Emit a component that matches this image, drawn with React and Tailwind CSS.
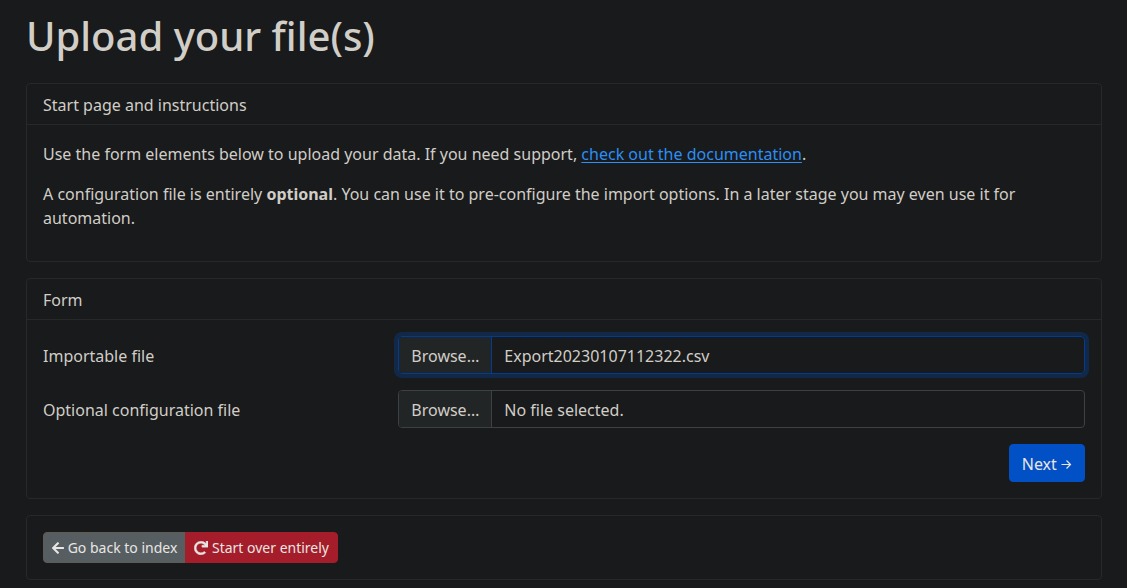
import { useState } from "react";
import { FaArrowLeft, FaRedo } from "react-icons/fa";

function Card({ title, children }) {
  return (
    <section className="rounded border border-[#272828] bg-[#181a1b]">
      {title && (
        <h2 className="border-b border-[#272828] px-4 pt-[9px] pb-[7px]">{title}</h2>
      )}
      <div className="p-4">{children}</div>
    </section>
  );
}

function FileRow({ id, label, initialName, active }) {
  const [name, setName] = useState(initialName);
  const border = active ? "border-[#013c91]" : "border-[#3c4144]";
  const ring = active ? "ring-4 ring-[#122849]" : "";
  return (
    <div className="-mx-3 mb-4 grid grid-cols-3">
      <label htmlFor={id} className="px-3 pt-2 pb-1.5">
        {label}
      </label>
      <div className="col-span-2 px-3">
        <label
          htmlFor={id}
          className={`relative flex cursor-pointer overflow-hidden rounded border ${border} ${ring}`}
        >
          <input
            id={id}
            type="file"
            className="sr-only"
            onChange={(e) => setName(e.target.files[0]?.name ?? "No file selected.")}
          />
          <span className={`border-r bg-[#222526] px-3 pt-[7px] pb-[5px] ${border}`}>
            Browse…
          </span>
          <span className="px-3 pt-[7px] pb-[5px]">{name}</span>
        </label>
      </div>
    </div>
  );
}

export default function App() {
  return (
    <main className="flex min-h-screen flex-col gap-4 bg-[#181a1b] pt-3 pr-[25px] pb-2 pl-[26px] font-['Noto_Sans',sans-serif] text-base text-[#d1cdc7]">
      <h1 className="mb-[7px] text-[40px] leading-[48px] font-medium">Upload your file(s)</h1>

      <Card title="Start page and instructions">
        <div className="pt-px pb-[15px]">
          <p className="mb-4">
            Use the form elements below to upload your data. If you need support,{" "}
            <a href="#documentation" className="text-[#2b8ff5] underline underline-offset-2">
              check out the documentation
            </a>
            .
          </p>
          <p>
            A configuration file is entirely <strong className="font-bold">optional</strong>. You
            can use it to pre-configure the import options. In a later stage you may even use it
            for automation.
          </p>
        </div>
      </Card>

      <Card title="Form">
        <form onSubmit={(e) => e.preventDefault()}>
          <FileRow
            id="importable"
            label="Importable file"
            initialName="Export20230107112322.csv"
            active
          />
          <FileRow
            id="configuration"
            label="Optional configuration file"
            initialName="No file selected."
          />
          <div className="flex justify-end">
            <button
              type="submit"
              className="rounded border border-[#0250c5] bg-[#0250c5] px-3 pt-[7px] pb-[5px] text-[#e8e6e3]"
            >
              Next{" "}
              <svg
                viewBox="0 0 11 11"
                aria-hidden="true"
                className="inline size-[11px] align-baseline"
                fill="none"
                stroke="currentColor"
                strokeWidth="1.2"
              >
                <path d="M0.5 5.5H9.3M5.5 1.5L9.5 5.5L5.5 9.5" />
              </svg>
            </button>
          </div>
        </form>
      </Card>

      <Card>
        <div className="flex text-sm leading-[21px] text-[#e8e6e3]">
          <a
            href="#index"
            className="rounded-l-sm border border-[#605b53] bg-[#565e62] px-2 py-1"
          >
            <FaArrowLeft
              aria-hidden="true"
              viewBox="0 0 448 512"
              className="inline w-3 align-[-2px]"
            />{" "}
            Go back to index
          </a>
          <a
            href="#flush"
            className="-ml-px rounded-r-sm border border-[#a51d2a] bg-[#a51d2a] px-2 py-1"
          >
            <FaRedo
              aria-hidden="true"
              strokeWidth="16"
              className="inline align-[-2px]"
              stroke="currentColor"
            />{" "}
            Start over entirely
          </a>
        </div>
      </Card>
    </main>
  );
}
